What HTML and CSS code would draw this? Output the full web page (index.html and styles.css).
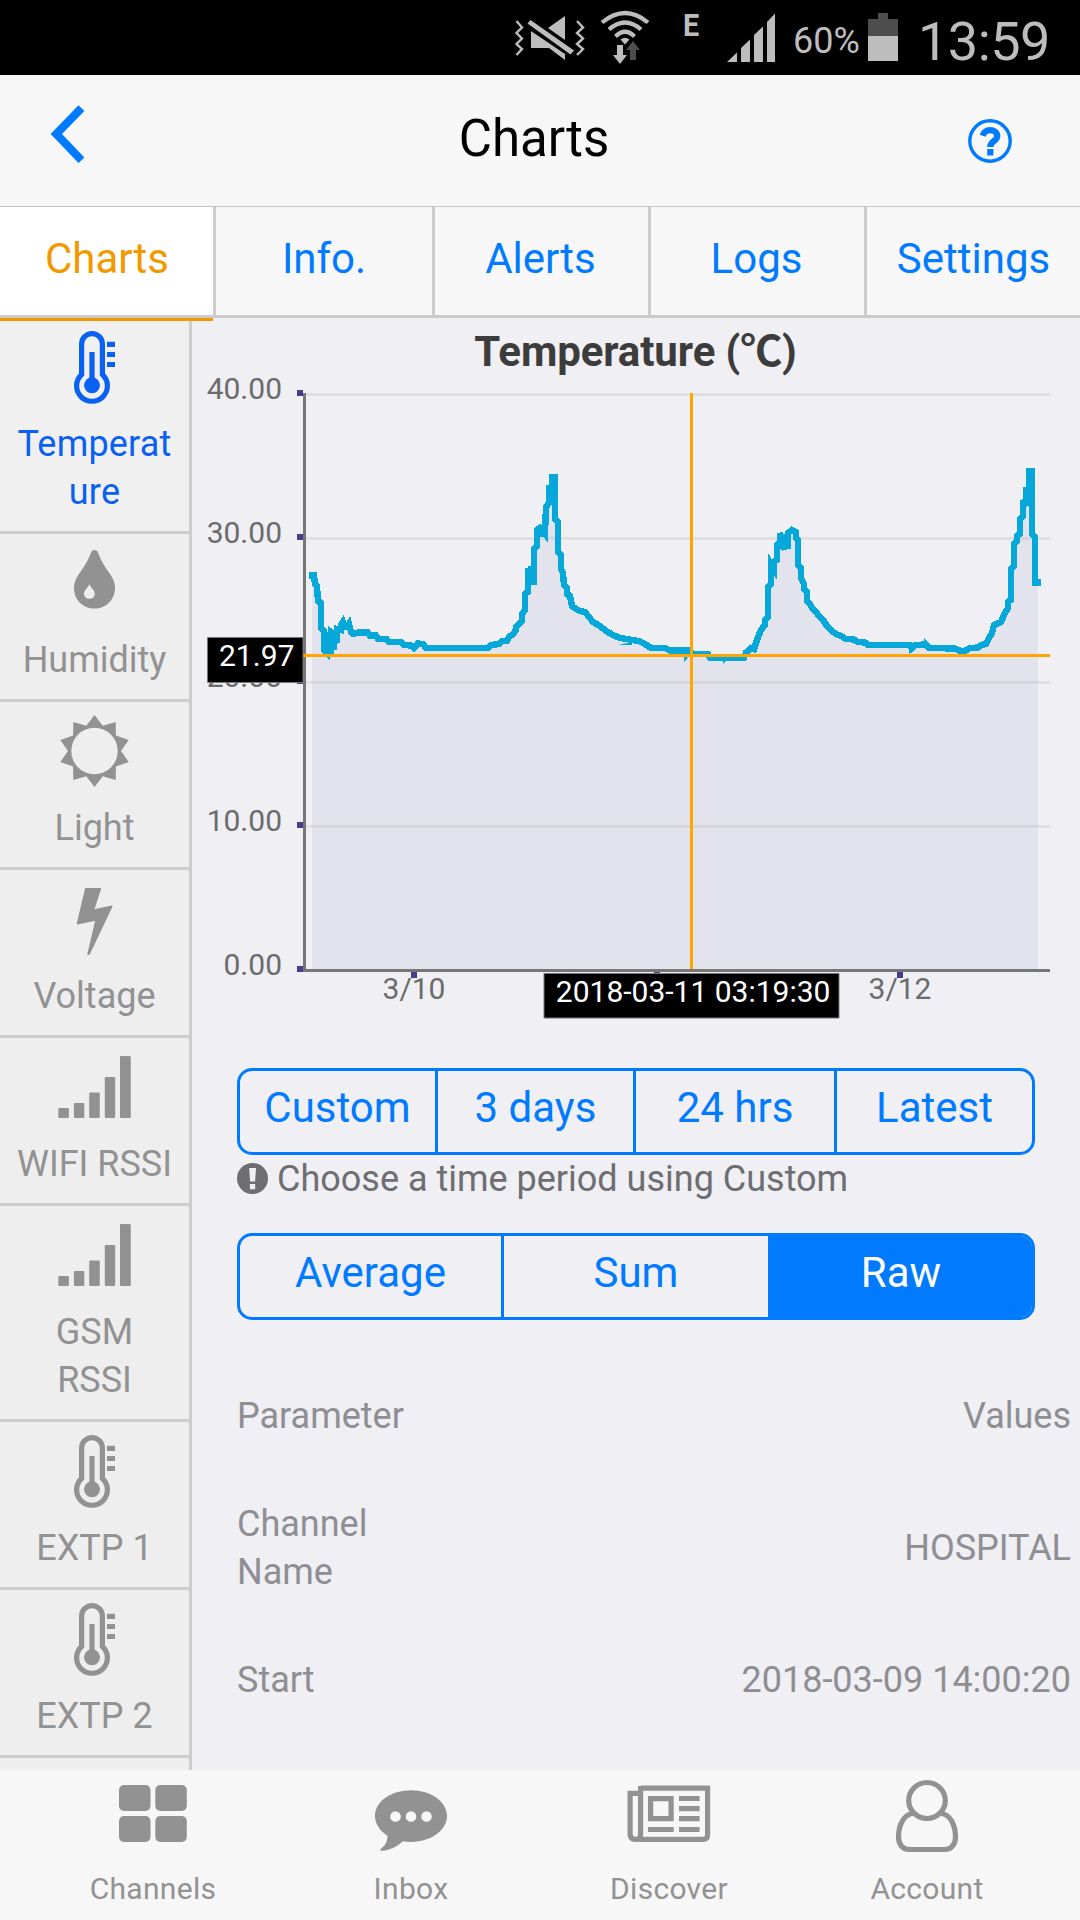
FILE: index.html
```html
<!DOCTYPE html>
<html lang="en">
<head>
<meta charset="utf-8">
<title>Charts</title>
<link rel="stylesheet" href="styles.css">
</head>
<body>
<div class="app">
  <div class="statusbar">
    <svg class="status-icons" viewBox="510 0 270 75" aria-hidden="true">
      <g fill="none" stroke="#bdbdbd" stroke-width="2.4">
        <path d="M516.500 21l5.500 6.500-5.500 5.500 5.500 5.500-5.500 5.500 5.500 5-5.500 6"/>
        <path d="M577 21l6 6.500-6 5.500 6 5.500-6 5.500 6 5-6 6"/>
      </g>
      <g fill="#bdbdbd">
        <path d="M565 16v24l-17-12z"/>
        <path d="M531 31l34 23v6L549 48h-18z"/>
        <path d="M530.500 20l43.500 30.500-3.500 4-43-31z"/>
        <path d="M620.500 39.500q4.500-3.500 9 0l-4.500 5z"/>
        <path d="M617 45h6v10h4l-7 9-7-9h4z"/>
        <path d="M727 62l10-9.500V62zM741 62V48l9-8.500V62zM754 62V35l9-8.500V62zM767 62V22l8-8.500V62z"/>
      </g>
      <g fill="none" stroke="#bdbdbd" stroke-width="4.200">
        <path d="M602 22.500q23-19 46 0"/>
        <path d="M609 29.500q16-14 32 0"/>
        <path d="M615.500 36.500q9.500-9.500 19 0"/>
      </g>
      <path fill="#4d4d4d" d="M630 60V50h-4l7-9 7 9h-4v10z"/>
      <text class="network" transform="translate(683 36) scale(.9 1)">E</text>
    </svg>
    <span class="battery-level">60%</span>
    <svg class="battery" viewBox="0 0 30 48" aria-hidden="true">
      <path fill="#4d4d4d" d="M10 0h10v6h10v17H0V6h10z"/>
      <path fill="#bdbdbd" d="M0 23h30v25H0z"/>
    </svg>
    <span class="clock">13:59</span>
  </div>

  <header class="navbar">
    <svg class="back" viewBox="0 0 36 60" aria-hidden="true"><path fill="#007aff" d="M.6 30 28.500 1.300 34.400 6.900 12 30l22.400 23.500-5.900 5.600z"/></svg>
    <h1>Charts</h1>
    <svg class="help" viewBox="0 0 44 44" aria-hidden="true">
      <circle cx="22" cy="22" r="20.200" fill="none" stroke="#007aff" stroke-width="3.400"/>
      <path fill="none" stroke="#007aff" stroke-width="6.300" d="M14.600 16.800C16 12.800 19 11.200 22 11.200c4 0 7.200 2.300 7.200 5.800 0 5.300-6.900 5-6.900 11"/>
      <path fill="#007aff" d="M19.200 30h6.200v6.500h-6.200z"/>
    </svg>
  </header>

  <nav class="tabs">
    <a class="active">Charts</a><a>Info.</a><a>Alerts</a><a>Logs</a><a>Settings</a>
  </nav>

  <main class="body">
    <aside class="sensors">
      <div class="sensor active">
        <svg viewBox="0 0 189 102"><use href="#thermometer"/></svg>
        <span>Temperature</span>
      </div>
      <div class="sensor">
        <svg viewBox="0 0 189 102"><path fill="currentColor" fill-rule="evenodd" d="M94.500 16c2 0 3 1 3.700 3 3.500 10 8.500 16 12.500 22 3 4.500 4.300 8.500 4.300 13 0 12-9 20.600-20.500 20.600S74 66 74 54c0-4.500 1.300-8.500 4.300-13 4-6 9-12 12.500-22 .7-2 1.700-3 3.700-3zM89.400 50c-1.400 4.400-5.400 6-5.400 9.700 0 3 2.300 5 5.400 5s5.400-2 5.400-5c0-3.700-4-5.300-5.400-9.700z"/></svg>
        <span>Humidity</span>
      </div>
      <div class="sensor">
        <svg viewBox="0 0 189 102"><path fill="currentColor" fill-rule="evenodd" d="M94.500 13l8.200 10.800 13-3.900.2 13.500 12.800 4.500L121 49l7.700 11.100-12.800 4.500-.2 13.500-13-3.900L94.500 85l-8.200-10.800-13 3.900-.2-13.500-12.800-4.500L68 49l-7.700-11.100 12.800-4.500.2-13.500 13 3.900zM94.500 25.800a23.200 23.200 0 1 0 0 46.400 23.200 23.200 0 1 0 0-46.400z"/></svg>
        <span>Light</span>
      </div>
      <div class="sensor">
        <svg viewBox="0 0 189 102"><path fill="currentColor" stroke="currentColor" stroke-width="1.600" stroke-linejoin="round" d="M85.800 18.700h14.500l-7 21.500 18.400-3.800L89 84.200h-.9L96.200 49.600 77.500 53.700z"/></svg>
        <span>Voltage</span>
      </div>
      <div class="sensor">
        <svg viewBox="0 0 189 102"><use href="#bars"/></svg>
        <span>WIFI RSSI</span>
      </div>
      <div class="sensor">
        <svg viewBox="0 0 189 102"><use href="#bars"/></svg>
        <span>GSM RSSI</span>
      </div>
      <div class="sensor">
        <svg viewBox="0 0 189 102"><use href="#thermometer"/></svg>
        <span>EXTP 1</span>
      </div>
      <div class="sensor">
        <svg viewBox="0 0 189 102"><use href="#thermometer"/></svg>
        <span>EXTP 2</span>
      </div>
    </aside>

    <section class="content">
      <!-- Plot area: 0-40 °C, 144 px per 10 °C -->
      <svg class="chart" viewBox="192 318 888 712">
        <text class="chart-title" x="635.500" y="365.700" text-anchor="middle">Temperature (℃)</text>
        <path fill="#e0e0e0" d="M306 393h744v3H306zM306 537h744v3H306zM306 681h744v3H306zM306 825h744v3H306z"/>
        <polygon class="area" points="312,969 312,575.500 317,586 321,603 325,650 334,650 341,625 349,624 355,633 368,633 389,642 414,646 426,648 488,648 502,641 513,634 522,621 525,594 531,575 534,549 537,530 546,530 549,490 552,477 555,477 558,522 561,555 564,585 570,596 576,609 585,612 600,626 613,635 633,640 651,648 690,650.500 710,657.500 744,657.500 754,649 765,625 768,587 777,550 780,534 792,530 798,542 801,570 810,604 823,620 836,634 854,639.500 868,645 910,645 963,650 981,645 994,625 1005,613 1011,600 1014,550 1020,530 1026,500 1029,471 1032,471 1035,537 1038,582.500 1038,969"/>
        <polyline class="series" points="309,575.500 314,575.500 315,584 317,586 318,601 321,603 321,628 324,631 324,650 327,653 327,632 328,651 331,651 331,632 334,634 334,650 334,637 337,643 337,629 341,630 341,625 343,622 345,627 347,627 349,624 351,632 353,634 358,632.500 368,632.500 370,635.500 376,635.500 378,638.500 387,639.500 389,642 401,642 404,645 411,645.500 414,648 418,643.500 423,644 426,648 488,648 491,645 499,644 502,641 507,640.500 509,637 513,634 516,630 516,627 519,624 522,621 522,614 525,610 525,594 528,592 528,568 531,582 534,582 534,549 537,546 537,530 540,528 545,534 546,507 549,503 549,485 552,500 552,477 555,477 555,519 558,522 558,552 561,555 561,569 563,573 564,585 567,588 567,594 570,596 572,606 576,609 580,611 585,612 589,617 593,622 600,626 606,631 613,635 620,638 633,640 640,641.500 645,644 651,648 665,648 670,650.500 690,650.500 692,654 708,654 710,657.500 744,657.500 746,652.500 751,648 754,649 756,643 758,637 761,630 765,625 765,620 768,617 768,587 771,584 771,564 774,569 774,562 777,560 777,545 780,542 780,533 784,547 788,546 788,533 792,530 796,532 796,538 798,540 798,565 801,568 801,578 804,584 804,589 807,592 807,601 810,604 812,608 816,612 819,616 823,620 827,626 832,631 836,634 841,636 846,639 854,639.500 858,642 865,642.500 868,645 910,645 912,648 915,645 925,644.500 929,648 955,648.500 963,652 970,648 978,647.500 981,645 986,644 989,638 992,633 994,625 1001,622 1005,613 1008,608 1008,602 1011,600 1011,569 1014,566 1014,544 1017,541 1017,536 1020,534 1020,519 1023,516 1023,500 1026,506 1026,487 1029,503 1029,471 1032,471 1032,534 1035,537 1035,582.500 1041,582.500"/>
        <path fill="#05a8d8" d="M342 618l7 9h-8zM684 655v7l4-4zM723 659v5l4-4zM909 648v6l7-5zM924 638v8l9 1zM618 645l14-3v3zM546 486h6v18h-6zM1026 468h9v38h-9zM537 526h9v11h-9zM779 534h11v15h-11zM528 566h4v16h-4z"/>
        <g fill="#483d8b">
          <path d="M297 390h6v6h-6zM297 534h6v6h-6zM297 678h6v6h-6zM297 822h6v6h-6zM297 966h6v6h-6z"/>
          <path d="M411 972h6v6h-6zM654 972h6v6h-6zM897 972h6v6h-6z"/>
        </g>
        <path fill="#777" d="M303 393h3v576h744v3H303z"/>
        <g class="axis-label" text-anchor="end">
          <text x="282" y="399">40.00</text>
          <text x="282" y="543">30.00</text>
          <text x="282" y="687">20.00</text>
          <text x="282" y="831">10.00</text>
          <text x="282" y="975">0.00</text>
        </g>
        <g class="axis-label" text-anchor="middle">
          <text x="414" y="999">3/10</text>
          <text x="900" y="999">3/12</text>
        </g>
        <path fill="#ffa500" d="M690 393h3v576h-3zM303 654h747v3H303z"/>
        <path stroke="#777" stroke-width="1" d="M207.500 637.500h95.500v45h-95.500zM544 973.500h295v44.500h-295z"/>
        <g class="marker-label">
          <text x="219" y="666">21.97</text>
          <text x="555.800" y="1002">2018-03-11 03:19:30</text>
        </g>
      </svg>

      <div class="controls">
        <div class="segmented periods"><a>Custom</a><a>3 days</a><a>24 hrs</a><a>Latest</a></div>
        <p class="hint">
          <svg viewBox="0 0 31 31" aria-hidden="true"><circle cx="15.500" cy="15.500" r="15.500" fill="#6d6d72"/><path fill="#efeff4" d="M12.200 5h6.800l-.9 13.500h-5zM12.900 21h5.300v5.300h-5.300z"/></svg>
          Choose a time period using Custom
        </p>
        <div class="segmented modes"><a>Average</a><a>Sum</a><a class="active">Raw</a></div>
      </div>

      <dl class="details">
        <div><dt>Parameter</dt><dd>Values</dd></div>
        <div><dt>Channel Name</dt><dd>HOSPITAL</dd></div>
        <div><dt>Start</dt><dd>2018-03-09 14:00:20</dd></div>
      </dl>
    </section>
  </main>

  <nav class="toolbar">
    <a>
      <svg viewBox="-48 0 96 90" fill="#929292"><rect x="-34" y="15" width="31.500" height="26" rx="5"/><rect x="2.300" y="15" width="31.500" height="26" rx="5"/><rect x="-34" y="46" width="31.500" height="26" rx="5"/><rect x="2.300" y="46" width="31.500" height="26" rx="5"/></svg>
      <span>Channels</span>
    </a>
    <a>
      <svg viewBox="-48 0 96 90"><path fill="#929292" fill-rule="evenodd" d="M0 20.300c20 0 36 11.500 36 25.800S20 71.900 0 71.900c-3 0-5.500-.2-8-.7-5.500 5-12.500 9-21 9.500-2 0-2.500-1-1-2 4-3 6.500-7 6.500-13C-31 61-36 54-36 46.100c0-14.300 16-25.800 36-25.800zM-15.500 41.200a5.300 5.300 0 1 0 0 10.600 5.300 5.300 0 1 0 0-10.600zM0 41.200a5.300 5.300 0 1 0 0 10.600 5.300 5.300 0 1 0 0-10.600zM15.500 41.200a5.300 5.300 0 1 0 0 10.600 5.300 5.300 0 1 0 0-10.600z"/></svg>
      <span>Inbox</span>
    </a>
    <a>
      <svg viewBox="-48 0 96 90" fill="none" stroke="#929292" stroke-width="5.200">
        <path d="M-28.400 18.200h67v46.500q0 4.600-4.600 4.600h-67.500q-5.400 0-5.400-5.600V23.400h10.500M-28.400 16v48q0 5-4 5"/>
        <path d="M-18.400 28.600h20.500v20H-18.400zM10 28.500h20.600M10 38.600h20.600M10 48.600h20.600M10 59.500h20.600M-21 59.500H4.700"/>
      </svg>
      <span>Discover</span>
    </a>
    <a>
      <svg viewBox="-48 0 96 90" fill="none" stroke="#929292" stroke-width="5.200">
        <ellipse cx="0" cy="30.500" rx="18.300" ry="18"/>
        <path d="M-14 43.500C-23 44-28.500 55-28.500 67c0 7 4 12.500 10.500 12.500h36C24.500 79.500 28.500 74 28.500 67 28.500 55 23 44 14 43.500"/>
      </svg>
      <span>Account</span>
    </a>
  </nav>
</div>

<svg class="symbols" aria-hidden="true">
  <symbol id="thermometer" viewBox="0 0 189 102">
    <path fill="none" stroke="currentColor" stroke-width="5.200" d="M81.600 56.500V26a10.400 10.400 0 0 1 20.800 0v30.500a15.400 15.400 0 1 1-20.800 0z"/>
    <path stroke="currentColor" stroke-width="5.200" d="M92 34v34M107 26.300h8M107 36.500h8M107 46.500h8"/>
    <circle cx="92" cy="67.300" r="8" fill="currentColor"/>
  </symbol>
  <symbol id="bars" viewBox="0 0 189 102">
    <g fill="currentColor"><rect x="58.300" y="70" width="10.600" height="10" rx="1"/><rect x="73.900" y="65" width="10.400" height="15" rx="1"/><rect x="89.200" y="54.500" width="10.600" height="25.500" rx="1"/><rect x="104.800" y="39" width="10.400" height="41" rx="1"/><rect x="120" y="18" width="10.800" height="62" rx="1"/></g>
  </symbol>
</svg>
</body>
</html>
```
FILE: styles.css
```css
* { box-sizing: border-box; margin: 0; padding: 0; }

body {
  width: 1080px;
  height: 1920px;
  overflow: hidden;
  background: #efeff4;
  font-family: Roboto, "Noto Sans CJK SC", sans-serif;
}

svg { display: block; }
.symbols { width: 0; height: 0; }

.app {
  display: flex;
  flex-direction: column;
  height: 1920px;
}

/* Android status bar */
.statusbar {
  display: flex;
  flex: none;
  height: 75px;
  padding-left: 510px;
  background: #000;
  color: #bdbdbd;
}
.status-icons { width: 270px; height: 75px; }
.network { font-size: 32px; font-weight: 700; fill: #bdbdbd; }
.battery-level {
  width: 88px;
  padding-left: 13px;
  font-size: 36px;
  line-height: 83px;
}
.battery { width: 30px; height: 48px; margin-top: 13px; }
.clock {
  margin-left: 20px;
  font-size: 54px;
  line-height: 83px;
  letter-spacing: -.5px;
}

/* Navigation bar */
.navbar {
  display: flex;
  flex: none;
  justify-content: space-between;
  height: 132px;
  padding: 0 68px 0 50px;
  border-bottom: 1px solid #c4c4c4;
  background: #f7f7f8;
}
.back { width: 36px; height: 60px; margin-top: 29px; }
.navbar h1 {
  margin-left: 14px;
  color: #000;
  font-size: 51px;
  font-weight: 400;
  line-height: 128px;
}
.help { width: 44px; height: 44px; margin-top: 44px; }

/* Tabs */
.tabs {
  display: grid;
  flex: none;
  grid-template-columns: repeat(5, 216px);
  height: 111px;
  border-bottom: 3px solid #ccc;
  background: #f7f7f8;
}
.tabs a {
  height: 108px;
  color: #007aff;
  font-size: 42px;
  line-height: 103px;
  text-align: center;
}
.tabs a:nth-child(n+3) { padding-right: 2px; border-left: 3px solid #ccc; }
.tabs a:last-child { padding-right: 0; }
.tabs .active {
  position: relative;
  padding-left: 1px;
  border-right: 3px solid #ccc;
  background: #fff;
  color: #f29900;
}
.tabs .active::after {
  content: "";
  position: absolute;
  top: 111px;
  left: 0;
  width: 213px;
  height: 3px;
  background: #f29900;
}

.body {
  display: flex;
  flex: none;
  height: 1452px;
  overflow: hidden;
}

/* Sensor list */
.sensors {
  flex: none;
  width: 192px;
  border-right: 3px solid #ccc;
  background: #eee;
  color: #929292;
}
.sensor {
  padding-bottom: 15px;
  border-bottom: 3px solid #ccc;
  font-size: 36px;
  line-height: 48px;
  text-align: center;
}
.sensor.active { background: #f0f0f0; color: #0a60f0; letter-spacing: .2px; }
.sensor svg { width: 189px; height: 102px; }
.sensor span {
  display: block;
  padding: 0 15px;
  word-break: break-all;
}
.sensor:not(.active) span { word-break: normal; padding: 0 8px; }
.sensor:nth-child(6) span { padding: 0 40px; }

/* Chart */
.content { flex: 1; }
.chart { width: 888px; height: 712px; }
.chart-title { font-size: 42px; font-weight: 700; fill: #3c3c3c; letter-spacing: -.1px; }
.axis-label { font-size: 30px; fill: #6b6b6b; }
.marker-label { font-size: 30px; fill: #fff; }
.area { fill: rgba(56, 56, 144, .06); }
.series {
  fill: none;
  stroke: #05a8d8;
  stroke-width: 6.4;
  shape-rendering: crispEdges;
}

/* Controls */
.controls { padding: 38px 45px 0; }
.segmented {
  display: grid;
  height: 87px;
  overflow: hidden;
  border: 3px solid #007aff;
  border-radius: 15px;
}
.periods { grid-template-columns: 198px 198px 201px 1fr; }
.modes { grid-template-columns: 264px 264px 1fr; }
.segmented a {
  border-right: 3px solid #007aff;
  color: #007aff;
  font-size: 42px;
  line-height: 73px;
  text-align: center;
}
.segmented a:last-child,
.modes a:nth-child(2) { border-right: 0; }
.segmented .active { background: #007aff; color: #fff; }
.modes .active { padding-left: 2px; }
.hint {
  display: flex;
  gap: 9px;
  height: 78px;
  color: #6d6d72;
  font-size: 36px;
  line-height: 48px;
}
.hint svg { width: 31px; height: 31px; margin-top: 8px; }

/* Details */
.details {
  padding: 42px 9px 0 45px;
  color: #8e8e93;
  font-size: 36px;
  line-height: 48px;
}
.details div {
  display: flex;
  align-items: center;
  justify-content: space-between;
  padding: 30px 0;
}
.details dt { width: 180px; }

/* Bottom toolbar */
.toolbar {
  display: grid;
  flex: none;
  grid-template-columns: repeat(4, 258px);
  height: 150px;
  padding: 0 24px;
  background: #f7f7f8;
}
.toolbar a {
  display: flex;
  flex-direction: column;
  align-items: center;
  color: #929292;
  font-size: 30px;
  line-height: 36px;
  letter-spacing: .3px;
}
.toolbar svg { width: 96px; height: 90px; margin-bottom: 11px; }
```
